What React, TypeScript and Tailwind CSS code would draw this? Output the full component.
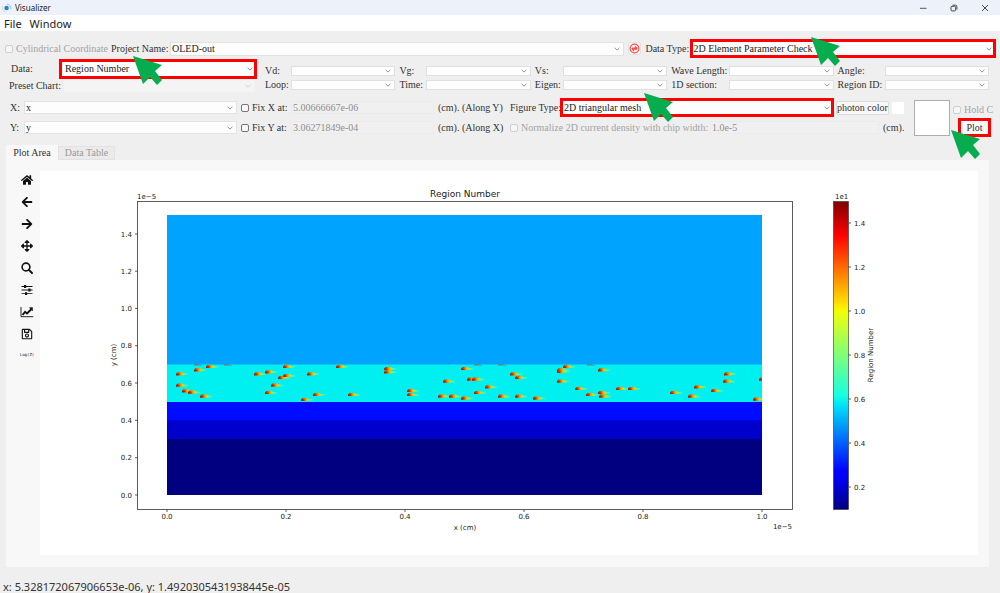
import React, { useState } from "react";
import {
  FaArrowLeft,
  FaArrowRight,
  FaArrowsAlt,
  FaHome,
  FaRegSave,
} from "react-icons/fa";

interface ComboProps {
  id: string;
  label: string;
  value?: string;
  disabled?: boolean;
  className?: string;
}

// Select box with its own chevron; the name is read from aria-label
const Combo: React.FC<ComboProps> = ({
  id,
  label,
  value = "",
  disabled = false,
  className = "h-3 border border-[#e2e2e2] pl-px",
}) => (
  <div className="relative min-w-0 flex-1 flex">
    <select
      id={id}
      aria-label={label}
      disabled={disabled}
      defaultValue={value}
      className={`w-full appearance-none rounded-none py-0 pr-4 leading-none text-[10px] text-[#222] opacity-100 outline-none ${
        disabled ? "bg-[#f4f4f4]" : "bg-[#fdfdfd]"
      } ${className}`}
    >
      <option value={value}>{value}</option>
    </select>
    <svg
      viewBox="0 0 6 4"
      className={`pointer-events-none absolute right-1 top-1/2 h-1 w-1.5 -translate-y-1/2 ${
        disabled ? "text-[#c4c4c4]" : "text-[#777]"
      }`}
    >
      <path d="M.6 .8 3 3.1 5.4 .8" fill="none" stroke="currentColor" strokeWidth=".8" />
    </svg>
  </div>
);

const redBox = "border-[3px] border-[#ff0000]";

const Pointer: React.FC<{ className: string }> = ({ className }) => (
  <svg
    viewBox="0 0 30 30"
    className={`pointer-events-none absolute z-10 h-[30px] w-[30px] ${className}`}
  >
    <path d="M0 0 29 9 22 15 29 24 24 29 17 21 10 28Z" fill="#05ad4f" />
  </svg>
);

interface CheckProps {
  label: string;
  disabled?: boolean;
  className?: string;
}

const Check: React.FC<CheckProps> = ({ label, disabled = false, className = "" }) => (
  <label
    className={`flex items-center gap-[3px] whitespace-nowrap ${
      disabled ? "text-[#a3a3a3]" : ""
    } ${className}`}
  >
    <input
      type="checkbox"
      disabled={disabled}
      className={`size-2 shrink-0 appearance-none rounded-[2px] border bg-[#f6f6f6] checked:bg-[#3b78c4] ${
        disabled ? "border-[#cfcfcf]" : "border-[#777]"
      }`}
    />
    {label}
  </label>
);

const sweepFields = [
  ["Vd:", "Vg:", "Vs:", "Wave Length:", "Angle:"],
  ["Loop:", "Time:", "Eigen:", "1D section:", "Region ID:"],
];

const xTicks = [
  { x: 167, t: "0.0" },
  { x: 286, t: "0.2" },
  { x: 405, t: "0.4" },
  { x: 524, t: "0.6" },
  { x: 643, t: "0.8" },
  { x: 762, t: "1.0" },
];

const yTicks = [
  { y: 495, t: "0.0" },
  { y: 457.7, t: "0.2" },
  { y: 420.3, t: "0.4" },
  { y: 383, t: "0.6" },
  { y: 345.7, t: "0.8" },
  { y: 308.4, t: "1.0" },
  { y: 271.2, t: "1.2" },
  { y: 234, t: "1.4" },
];

const barTicks = [
  { y: 487, t: "0.2" },
  { y: 443, t: "0.4" },
  { y: 399, t: "0.6" },
  { y: 355, t: "0.8" },
  { y: 311, t: "1.0" },
  { y: 267, t: "1.2" },
  { y: 223, t: "1.4" },
];

// Jet colour map, top to bottom
const jet = [
  ["0", "#800000"],
  ["0.11", "#ff0000"],
  ["0.34", "#ffea00"],
  ["0.36", "#f0ff08"],
  ["0.5", "#7dff7a"],
  ["0.63", "#16ffe1"],
  ["0.66", "#00e4f8"],
  ["0.875", "#0000ff"],
  ["0.89", "#0000ff"],
  ["1", "#000080"],
];

// Emitter flecks inside the 6th region
const flecks = [
  [176, 374], [194, 370], [206, 366.7], [254, 374], [265, 372], [278, 377.7],
  [283, 375.7], [271, 385.3], [283, 366.7], [307, 374], [336, 366.7],
  [176, 385.3], [182, 391], [188, 392.3], [200, 396.3], [265, 392.7],
  [301, 399.7], [313, 394.7], [348, 394.7], [384, 368.7], [384, 372],
  [407, 390.7], [407, 394.7], [438, 396.3], [449, 396.3], [461, 368.7],
  [461, 398.3], [443, 381.3], [467, 379.3], [472, 379.3], [474, 392.7],
  [485, 387], [510, 374], [515, 377.7], [498, 396.3], [515, 396.3],
  [533, 398.3], [557, 381.3], [557, 370], [557, 371.5], [563, 366.7],
  [598, 370], [575, 388.7], [586, 394.7], [598, 392.7], [599, 396.3],
  [616, 388.7], [628, 388.7], [670, 392.7], [688, 396.3], [694, 387],
  [711, 390.7], [724, 374], [723, 381.3], [753, 399.3], [759, 379.3],
];

const slivers = [194, 224, 474, 498, 587];

const Plot: React.FC = () => (
  <svg
    viewBox="40 171 938 384"
    role="img"
    aria-label="Region Number"
    className="block w-full bg-white font-['DejaVu_Sans',sans-serif] text-[7px]"
  >
    <defs>
      <linearGradient id="jet" x1="0" y1="0" x2="0" y2="1">
        {jet.map(([offset, color]) => (
          <stop key={offset} offset={offset} stopColor={color} />
        ))}
      </linearGradient>
      <linearGradient id="fleck">
        <stop offset="0" stopColor="#8a2a10" />
        <stop offset=".15" stopColor="#d03a00" />
        <stop offset=".35" stopColor="#f08a00" />
        <stop offset=".5" stopColor="#e8c800" />
        <stop offset=".62" stopColor="#b0e84a" />
        <stop offset=".78" stopColor="#5cf0a8" />
        <stop offset="1" stopColor="#20f0dc" />
      </linearGradient>
      <clipPath id="mesh">
        <rect x="167" y="215" width="595" height="280" />
      </clipPath>
    </defs>

    <g clipPath="url(#mesh)">
      <rect x="167" y="215" width="595" height="150" fill="#00a4ff" />
      <rect x="167" y="364.5" width="595" height="38" fill="#00eff1" />
      <rect x="167" y="402" width="595" height="19" fill="#000cff" />
      <rect x="167" y="420.3" width="595" height="19" fill="#0000cc" />
      <rect x="167" y="439" width="595" height="56" fill="#000080" />
      {flecks.map(([x, y]) => (
        <g key={`${x}-${y}`} transform={`translate(${x} ${y})`}>
          <path d="M0 -.3 1.5 -1.8H6.5L8 -.8H12.5V1.1H8L6.5 1.4H0Z" fill="url(#fleck)" />
          <path d="M.3 0H3.5V1.2H.3Z" fill="#a81800" opacity=".75" />
        </g>
      ))}
      {slivers.map((x) => (
        <path key={x} d={`M${x} 364.3h4l5 1.2h-9z`} fill="#6a7a70" />
      ))}
    </g>

    <rect x="137.5" y="201.5" width="655" height="308" fill="none" stroke="#333" strokeWidth=".8" />
    <rect x="833.5" y="201.5" width="15" height="308" fill="url(#jet)" stroke="#333" strokeWidth=".6" />

    <g stroke="#333" strokeWidth=".8">
      {xTicks.map(({ x }) => (
        <path key={x} d={`M${x} 509.5v2.5`} />
      ))}
      {yTicks.map(({ y }) => (
        <path key={y} d={`M137.5 ${y}h-2.5`} />
      ))}
      {barTicks.map(({ y }) => (
        <path key={y} d={`M848.5 ${y}h2.5`} />
      ))}
    </g>

    <g fill="#222">
      {xTicks.map(({ x, t }) => (
        <text key={t} x={x} y="519" textAnchor="middle">
          {t}
        </text>
      ))}
      {yTicks.map(({ y, t }) => (
        <text key={t} x="132" y={y + 2.5} textAnchor="end">
          {t}
        </text>
      ))}
      {barTicks.map(({ y, t }) => (
        <text key={t} x="854" y={y + 2.5}>
          {t}
        </text>
      ))}
      <text x="137" y="199">1e−5</text>
      <text x="792" y="529" textAnchor="end">1e−5</text>
      <text x="835" y="199">1e1</text>
      <text x="465" y="197" textAnchor="middle" className="text-[9px]">
        Region Number
      </text>
      <text x="465" y="530" textAnchor="middle">x (cm)</text>
      <text transform="translate(116 355) rotate(-90)" textAnchor="middle">
        y (cm)
      </text>
      <text transform="translate(873 355) rotate(-90)" textAnchor="middle">
        Region Number
      </text>
    </g>
  </svg>
);

const tools = [
  { name: "Home", icon: <FaHome className="size-3" /> },
  { name: "Back", icon: <FaArrowLeft className="size-3" /> },
  { name: "Forward", icon: <FaArrowRight className="size-3" /> },
  { name: "Pan", icon: <FaArrowsAlt className="size-3" /> },
  {
    name: "Zoom",
    icon: (
      <svg viewBox="0 0 12 12" className="size-3" fill="none" stroke="currentColor">
        <circle cx="5" cy="5" r="3.9" strokeWidth="1.6" />
        <path d="m7.9 7.9 3.1 3.1" strokeWidth="2" strokeLinecap="round" />
      </svg>
    ),
  },
  {
    name: "Configure subplots",
    icon: (
      <svg viewBox="0 0 12 12" className="size-3" fill="currentColor">
        <path d="M.5 2h11v.9H.5zM.5 5.6h11v.9H.5zM.5 9.2h11v.9H.5z" />
        <path d="M3 1h2.2v2.9H3zM7.3 4.6h2.2v2.9H7.3zM4 8.2h2.2v2.9H4z" />
      </svg>
    ),
  },
  {
    name: "Edit axis",
    icon: (
      <svg viewBox="0 0 14 12" className="h-3 w-3.5" fill="none" stroke="currentColor">
        <path d="M1 1v9.7h12.3" strokeWidth=".9" />
        <path d="m2.5 9 2.6-3.2 1.9 1.6 4.3-4.2" strokeWidth="1.9" />
        <path d="M9.3 1.6h3.3v3.3z" fill="currentColor" strokeWidth=".4" />
      </svg>
    ),
  },
  { name: "Save", icon: <FaRegSave className="size-3" /> },
];

const App: React.FC = () => {
  const [tab, setTab] = useState("Plot Area");

  return (
    <div className="flex min-h-screen flex-col overflow-hidden bg-[#efefef] font-['Liberation_Serif',serif] text-[10px] leading-none text-[#333]">
      {/* Title bar */}
      <header className="flex h-[15px] items-center bg-[#edf2fa] pl-[2px] pr-[11px] font-['Noto_Sans',sans-serif] text-[8px] text-[#222]">
        <svg viewBox="0 0 10 10" className="mr-[3px] size-2.5">
          <circle cx="4.6" cy="5" r="2.2" fill="#1287e8" />
          <path d="M1.2 3.4A4 4 0 0 0 3.4 9" fill="none" stroke="#e8d98a" strokeWidth="1" />
          <path d="M5 1.2A4 4 0 0 1 8.8 5.8" fill="none" stroke="#8ac4ea" strokeWidth="1" />
        </svg>
        <span>Visualizer</span>
        <div className="ml-auto flex items-center gap-[23px] text-[#333]">
          <button aria-label="Minimize" className="flex">
            <svg viewBox="0 0 8 8" className="size-2" fill="none" stroke="currentColor">
              <path d="M1 4.3h6.5" strokeWidth=".8" />
            </svg>
          </button>
          <button aria-label="Restore" className="flex">
            <svg viewBox="0 0 8 8" className="size-2" fill="none" stroke="currentColor" strokeWidth=".9">
              <rect x="1" y="2.3" width="4.6" height="4.6" rx="1" />
              <path d="M2.5 1.2h3q1.4 0 1.4 1.4v3" />
            </svg>
          </button>
          <button aria-label="Close" className="flex">
            <svg viewBox="0 0 8 8" className="size-2" fill="none" stroke="currentColor" strokeWidth=".9">
              <path d="m1 1 6 6M7 1 1 7" />
            </svg>
          </button>
        </div>
      </header>

      <nav className="flex h-4 items-center gap-2 bg-white pl-1 font-['Noto_Sans',sans-serif] text-[11px] text-[#222]">
        <button>File</button>
        <button>Window</button>
      </nav>

      {/* Project row */}
      <div className="mt-2 flex h-[19px] items-center pl-[5px] pr-1">
        <Check label="Cylindrical Coordinate" disabled className="w-[106px]" />
        <label htmlFor="project" className="w-[59px] whitespace-nowrap">
          Project Name:
        </label>
        <div className="flex min-w-0 flex-[455]">
          <Combo
            id="project"
            label="Project Name"
            value="OLED-out"
            className="h-3.5 border border-[#e2e2e2] pl-px"
          />
        </div>
        <button
          aria-label="Reload"
          className="mx-1 flex size-[13px] items-center justify-center rounded-[2px] border border-[#e2e2e2] bg-[#f8f8f8]"
        >
          <svg viewBox="0 0 12 12" className="size-[11px] shrink-0">
            <circle cx="6" cy="6" r="4.8" fill="#fdf0f0" stroke="#f4514f" strokeWidth="1.3" />
            <path
              d="M3.2 5.5h5.2L6.6 3.4M8.8 6.7H3.6l1.8 2.1"
              fill="none"
              stroke="#f4514f"
              strokeWidth="1.2"
            />
          </svg>
        </button>
        <label htmlFor="datatype" className="w-[45px] whitespace-nowrap">
          Data Type:
        </label>
        <div className="relative flex min-w-0 flex-[306]">
          <Combo
            id="datatype"
            label="Data Type"
            value="2D Element Parameter Check"
            className={`h-[19px] ${redBox}`}
          />
          <Pointer className="-top-0.5 left-[121px]" />
        </div>
      </div>

      {/* Data selection */}
      <div className="mt-px flex pl-[9px] pr-[11px]">
        <div className="flex min-w-0 flex-[248] flex-col gap-px">
          <div className="flex items-center">
            <label htmlFor="data" className="w-[50px] pl-0.5">
              Data:
            </label>
            <div className="relative flex min-w-0 flex-1">
              <Combo
                id="data"
                label="Data"
                value="Region Number"
                className={`h-5 pl-[3px] ${redBox}`}
              />
              <Pointer className="-top-[3px] left-[74px]" />
            </div>
          </div>
          <div className="flex items-center pr-0.5">
            <label htmlFor="preset" className="w-[55px] whitespace-nowrap">
              Preset Chart:
            </label>
            <Combo id="preset" label="Preset Chart" disabled className="h-3" />
          </div>
        </div>
        <div className="ml-1 grid min-w-0 flex-[728] grid-cols-[30px_1fr_31px_1fr_32px_1fr_62px_1fr_51px_1fr] content-start items-center gap-y-1 pt-[7px]">
          {sweepFields.flat().map((name) => (
            <React.Fragment key={name}>
              <label htmlFor={name} className="whitespace-nowrap pl-1">
                {name}
              </label>
              <Combo id={name} label={name} className="h-2.5 border border-[#e0e0e0]" />
            </React.Fragment>
          ))}
        </div>
      </div>

      {/* Axes and figure type */}
      <div className="mt-1.5 flex pl-2.5 pr-[9px]">
        <div className="grid min-w-0 flex-1 grid-cols-[14px_213fr_54px_143fr_76px_394fr] grid-rows-[19px_19px] items-center gap-y-px">
          <label htmlFor="xaxis">X:</label>
          <Combo id="xaxis" label="X" value="x" className="h-[13px] border border-[#e2e2e2] pl-px" />
          <Check label="Fix X at:" className="pl-1" />
          <input
            aria-label="Fix X value"
            disabled
            defaultValue="5.00666667e-06"
            className="h-[13px] min-w-0 border border-[#ebebeb] bg-[#f0f0f0] px-px text-[#8f8f8f]"
          />
          <span className="whitespace-nowrap pl-1">(cm). (Along Y)</span>
          <div className="flex min-w-0 items-center">
            <label htmlFor="figure" className="w-[50px] whitespace-nowrap">
              Figure Type:
            </label>
            <div className="relative flex min-w-0 flex-1">
              <Combo
                id="figure"
                label="Figure Type"
                value="2D triangular mesh"
                className={`h-[19px] pl-px ${redBox}`}
              />
              <Pointer className="-top-[5px] left-[84px]" />
            </div>
            <button className="ml-0.5 h-3.5 w-[53px] whitespace-nowrap rounded-[2px] border border-[#dcdcdc] bg-[#f8f8f8]">
              photon color
            </button>
            <span className="ml-[3px] size-3 bg-white" />
          </div>

          <label htmlFor="yaxis">Y:</label>
          <Combo id="yaxis" label="Y" value="y" className="h-[13px] border border-[#e2e2e2] pl-px" />
          <Check label="Fix Y at:" className="pl-1" />
          <input
            aria-label="Fix Y value"
            disabled
            defaultValue="3.06271849e-04"
            className="h-[13px] min-w-0 border border-[#ebebeb] bg-[#f0f0f0] px-px text-[#8f8f8f]"
          />
          <span className="whitespace-nowrap pl-1">(cm). (Along X)</span>
          <div className="flex min-w-0 items-center">
            <Check
              label="Normalize 2D current density with chip width:"
              disabled
              className="w-[200px]"
            />
            <input
              aria-label="Chip width"
              disabled
              defaultValue="1.0e-5"
              className="h-[13px] min-w-0 flex-1 border border-[#ebebeb] bg-[#f0f0f0] px-px text-[#8f8f8f]"
            />
            <span className="w-[25px] pl-1">(cm).</span>
          </div>
        </div>
        <div className="ml-2.5 mt-0.5 size-9 border border-[#aaaeb4] bg-white" />
        <div className="ml-[3px] flex w-[38px] flex-col items-end gap-px">
          <Check label="Hold C" disabled className="h-[19px] w-full pt-1" />
          <div className="relative">
            <button
              className={`block h-[19px] w-[33px] bg-[#fafafa] leading-none ${redBox}`}
            >
              Plot
            </button>
            <Pointer className="-left-[7px] top-3" />
          </div>
        </div>
      </div>

      {/* Tabs */}
      <div role="tablist" className="mt-2 flex h-[15px] items-end pl-1.5">
        {["Plot Area", "Data Table"].map((name) => (
          <button
            key={name}
            role="tab"
            aria-selected={tab === name}
            onClick={() => setTab(name)}
            className={`whitespace-nowrap border-[#e2e2e2] ${
              tab === name
                ? "h-[15px] w-[52px] bg-[#f8f8f8]"
                : "h-3.5 w-[57px] border bg-[#ebebeb] text-[#999]"
            }`}
          >
            {name}
          </button>
        ))}
      </div>
      <main className="ml-1.5 mr-[11px] flex bg-[#f8f8f8] pb-3 pr-[11px] pt-[9px]">
        <div className="flex w-[34px] shrink-0 flex-col items-center pl-2 text-[#111]">
          {tools.map(({ name, icon }) => (
            <button
              key={name}
              aria-label={name}
              className="flex h-[22px] w-5 items-center justify-center"
            >
              {icon}
            </button>
          ))}
          <button className="h-5 font-['DejaVu_Sans_Mono',monospace] text-[4px]">Log(Z)</button>
        </div>
        <div className="min-w-0 flex-1 pt-0.5">
          <Plot />
        </div>
      </main>

      <footer className="mt-auto pb-px pl-[3px] pt-3 font-['Noto_Sans',sans-serif] text-[11px]">
        x: 5.328172067906653e-06, y: 1.4920305431938445e-05
      </footer>
    </div>
  );
};

export default App;
